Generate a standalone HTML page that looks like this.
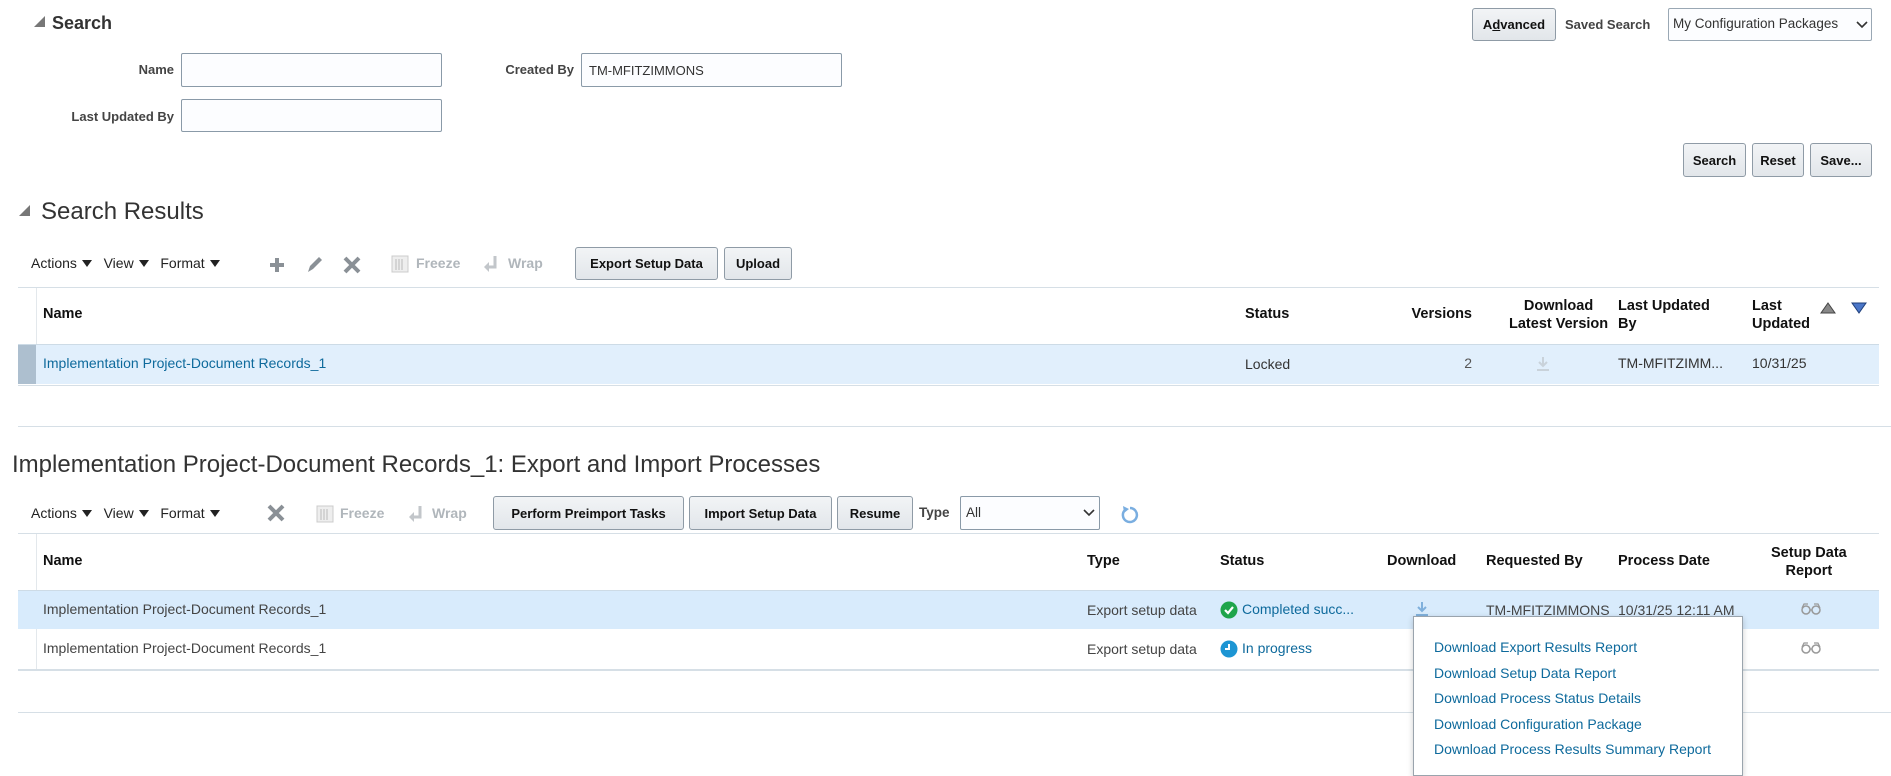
<!DOCTYPE html>
<html><head><style>
*{box-sizing:border-box;margin:0;padding:0}
body{width:1891px;height:769px;overflow:hidden;background:#fff;font-family:"Liberation Sans",Arial,sans-serif;font-size:13.5px;color:#333;position:relative}
.a{position:absolute;white-space:nowrap}
.lbl{font-weight:bold;color:#444;font-size:13px}
.inp{position:absolute;border:1px solid #8a9aa8;background:#fcfdff;border-radius:2px}
.btn{position:absolute;border:1px solid #8f9ba6;background:linear-gradient(#f2f4f6,#e2e6ea);border-radius:3px;font-weight:bold;font-size:13px;color:#111;text-align:center;display:flex;align-items:center;justify-content:center}
.hl{position:absolute;height:1px;background:#d6dfe6}
.th{font-weight:bold;color:#111;font-size:14.5px}
.link{color:#0e6a9c}
.dis{color:#b0b6bb;font-weight:bold}
.tri{display:inline-block;width:0;height:0;border-left:5px solid transparent;border-right:5px solid transparent;border-top:7px solid #222;margin-left:5px;vertical-align:1px}
</style></head><body>
<!-- Search -->
<div class="a" style="left:34px;top:16px;width:0;height:0;border-left:11px solid transparent;border-bottom:11px solid #777"></div>
<div class="a" style="left:52px;top:13px;font-size:18px;font-weight:bold;color:#333">Search</div>
<div class="a lbl" style="right:1717px;top:62px">Name</div>
<div class="inp" style="left:181px;top:53px;width:261px;height:34px"></div>
<div class="a lbl" style="right:1317px;top:62px">Created By</div>
<div class="inp" style="left:581px;top:53px;width:261px;height:34px"></div>
<div class="a" style="left:589px;top:63px;font-size:13px;color:#333">TM-MFITZIMMONS</div>
<div class="a lbl" style="right:1717px;top:109px">Last Updated By</div>
<div class="inp" style="left:181px;top:99px;width:261px;height:33px"></div>
<div class="btn" style="left:1472px;top:8px;width:84px;height:33px">A<u>d</u>vanced</div>
<div class="a lbl" style="left:1565px;top:17px">Saved Search</div>
<div class="inp" style="left:1668px;top:8px;width:204px;height:33px;border-color:#9aa8b4"></div>
<div class="a" style="left:1673px;top:16px;font-size:13.5px;color:#333">My Configuration Packages</div>
<svg class="a" style="left:1856px;top:20px" width="12" height="10"><path d="M1 2l5 5 5-5" stroke="#333" stroke-width="1.6" fill="none"/></svg>
<div class="btn" style="left:1683px;top:143px;width:63px;height:34px">Search</div>
<div class="btn" style="left:1752px;top:143px;width:52px;height:34px">Reset</div>
<div class="btn" style="left:1810px;top:143px;width:62px;height:34px">Save...</div>

<!-- Search results -->
<div class="a" style="left:19px;top:205px;width:0;height:0;border-left:11px solid transparent;border-bottom:11px solid #777"></div>
<div class="a" style="left:41px;top:198px;font-size:24px;color:#333">Search Results</div>
<div class="a" style="left:31px;top:255px;font-size:14px;color:#222">Actions<span class="tri"></span>&nbsp;&nbsp; View<span class="tri"></span>&nbsp;&nbsp; Format<span class="tri"></span></div>
<svg class="a" style="left:267px;top:255px" width="20" height="20"><path d="M10 3v14M3 10h14" stroke="#8a9096" stroke-width="4"/></svg>
<svg class="a" style="left:304px;top:253px" width="22" height="22"><path d="M4 19l2-6L15 4l3 3-9 9z" fill="#8a9096"/></svg>
<svg class="a" style="left:342px;top:255px" width="20" height="20"><path d="M3 3l14 14M17 3L3 17" stroke="#8a9096" stroke-width="4"/></svg>
<svg class="a" style="left:391px;top:255px" width="18" height="18"><rect x="1" y="1" width="16" height="16" fill="#eee" stroke="#ccc"/><path d="M5 4v11M8 4v11M11 4v11" stroke="#bbb"/></svg>
<div class="a dis" style="left:416px;top:255px;font-size:14px">Freeze</div>
<svg class="a" style="left:483px;top:255px" width="16" height="18"><path d="M12 1v11H4" stroke="#c2c6ca" stroke-width="3" fill="none"/><path d="M1 12l5-5v10z" fill="#c2c6ca"/></svg>
<div class="a dis" style="left:508px;top:255px;font-size:14px">Wrap</div>
<div class="btn" style="left:575px;top:247px;width:143px;height:33px">Export Setup Data</div>
<div class="btn" style="left:724px;top:247px;width:68px;height:33px">Upload</div>

<div class="hl" style="left:18px;top:287px;width:1861px"></div>
<div class="a" style="left:36px;top:288px;width:1px;height:57px;background:#e3e8ec"></div>
<div class="a th" style="left:43px;top:306px">Name</div>
<div class="a th" style="left:1245px;top:306px">Status</div>
<div class="a th" style="right:419px;top:306px">Versions</div>
<div class="a th" style="left:1509px;top:297px;text-align:center;line-height:18px">Download<br>Latest Version</div>
<div class="a th" style="left:1618px;top:297px;line-height:18px">Last Updated<br>By</div>
<div class="a th" style="left:1752px;top:297px;line-height:18px">Last<br>Updated</div>
<svg class="a" style="left:1819px;top:301px" width="18" height="14"><path d="M9 2L16 12H2z" fill="#888" stroke="#444"/></svg>
<svg class="a" style="left:1850px;top:301px" width="18" height="14"><path d="M2 2h14L9 12z" fill="#4a76c8" stroke="#1f3f7a"/></svg>
<div class="a" style="left:18px;top:344px;width:1861px;height:40px;background:#e1effc;border-top:1px solid #cddbe6"></div>
<div class="a" style="left:18px;top:345px;width:18px;height:39px;background:#adbfcf"></div>
<div class="a link" style="left:43px;top:355px;font-size:14px">Implementation Project-Document Records_1</div>
<div class="a" style="left:1245px;top:356px;font-size:14px">Locked</div>
<div class="a" style="right:419px;top:355px;font-size:14px;color:#555">2</div>
<svg class="a" style="left:1535px;top:355px" width="16" height="18"><path d="M8 2v9M4 7l4 4 4-4M2 15h12" stroke="#c9d2da" stroke-width="2" fill="none"/></svg>
<div class="a" style="left:1618px;top:355px;font-size:14px">TM-MFITZIMM...</div>
<div class="a" style="left:1752px;top:355px;font-size:14px">10/31/25</div>
<div class="hl" style="left:18px;top:385px;width:1861px"></div>

<div class="hl" style="left:18px;top:426px;width:1873px"></div>
<div class="a" style="left:12px;top:451px;font-size:24px;color:#333">Implementation Project-Document Records_1: Export and Import Processes</div>

<div class="a" style="left:31px;top:505px;font-size:14px;color:#222">Actions<span class="tri"></span>&nbsp;&nbsp; View<span class="tri"></span>&nbsp;&nbsp; Format<span class="tri"></span></div>
<svg class="a" style="left:266px;top:503px" width="20" height="20"><path d="M3 3l14 14M17 3L3 17" stroke="#8a9096" stroke-width="4"/></svg>
<svg class="a" style="left:316px;top:505px" width="18" height="18"><rect x="1" y="1" width="16" height="16" fill="#eee" stroke="#ccc"/><path d="M5 4v11M8 4v11M11 4v11" stroke="#bbb"/></svg>
<div class="a dis" style="left:340px;top:505px;font-size:14px">Freeze</div>
<svg class="a" style="left:408px;top:505px" width="16" height="18"><path d="M12 1v11H4" stroke="#c2c6ca" stroke-width="3" fill="none"/><path d="M1 12l5-5v10z" fill="#c2c6ca"/></svg>
<div class="a dis" style="left:432px;top:505px;font-size:14px">Wrap</div>
<div class="btn" style="left:493px;top:496px;width:191px;height:34px">Perform Preimport Tasks</div>
<div class="btn" style="left:689px;top:496px;width:143px;height:34px">Import Setup Data</div>
<div class="btn" style="left:837px;top:496px;width:76px;height:34px">Resume</div>
<div class="a lbl" style="left:919px;top:505px;font-size:13.5px">Type</div>
<div class="inp" style="left:960px;top:496px;width:140px;height:34px"></div>
<div class="a" style="left:966px;top:505px;font-size:13.5px">All</div>
<svg class="a" style="left:1083px;top:508px" width="12" height="10"><path d="M1 2l5 5 5-5" stroke="#333" stroke-width="1.6" fill="none"/></svg>
<svg class="a" style="left:1119px;top:503px" width="22" height="22"><path d="M6 7a7 7 0 1 0 5-2" stroke="#7aaee0" stroke-width="2.5" fill="none"/><path d="M4 3l6 3-5 4z" fill="#7aaee0"/></svg>

<div class="hl" style="left:18px;top:533px;width:1861px"></div>
<div class="a" style="left:36px;top:534px;width:1px;height:136px;background:#e3e8ec"></div>
<div class="a th" style="left:43px;top:553px">Name</div>
<div class="a th" style="left:1087px;top:553px">Type</div>
<div class="a th" style="left:1220px;top:553px">Status</div>
<div class="a th" style="left:1387px;top:553px">Download</div>
<div class="a th" style="left:1486px;top:553px">Requested By</div>
<div class="a th" style="left:1618px;top:553px">Process Date</div>
<div class="a th" style="left:1771px;top:544px;text-align:center;line-height:18px">Setup Data<br>Report</div>
<div class="a" style="left:18px;top:590px;width:1861px;height:39px;background:#d8ebfc;border-top:1px solid #cddbe6"></div>
<div class="a" style="left:43px;top:601px;font-size:14px;color:#444">Implementation Project-Document Records_1</div>
<div class="a" style="left:1087px;top:602px;font-size:14px;color:#444">Export setup data</div>
<svg class="a" style="left:1220px;top:601px" width="18" height="18"><circle cx="9" cy="9" r="8.5" fill="#1fa54b"/><path d="M5 9l3 3 5-6" stroke="#fff" stroke-width="2.2" fill="none"/></svg>
<div class="a link" style="left:1242px;top:601px;font-size:14px">Completed succ...</div>
<svg class="a" style="left:1414px;top:600px" width="16" height="18"><path d="M8 2v9M4 7l4 4 4-4M2 15h12" stroke="#7fb0dc" stroke-width="2" fill="none"/></svg>
<div class="a" style="left:1486px;top:602px;font-size:14px;color:#444">TM-MFITZIMMONS</div>
<div class="a" style="left:1618px;top:602px;font-size:14px;color:#444">10/31/25 12:11 AM</div>
<svg class="a" style="left:1800px;top:602px" width="22" height="14"><circle cx="6" cy="8" r="4" stroke="#999" fill="none" stroke-width="1.5"/><circle cx="16" cy="8" r="4" stroke="#999" fill="none" stroke-width="1.5"/><path d="M2 6l2-4h4M20 6l-2-4h-4M10 8h2" stroke="#999" fill="none" stroke-width="1.2"/></svg>
<div class="a" style="left:43px;top:640px;font-size:14px;color:#444">Implementation Project-Document Records_1</div>
<div class="a" style="left:1087px;top:641px;font-size:14px;color:#444">Export setup data</div>
<svg class="a" style="left:1220px;top:640px" width="18" height="18"><circle cx="9" cy="9" r="8.5" fill="#1d95d3"/><path d="M9 4v5h-4" stroke="#fff" stroke-width="2" fill="none"/></svg>
<div class="a link" style="left:1242px;top:640px;font-size:14px">In progress</div>
<svg class="a" style="left:1800px;top:641px" width="22" height="14"><circle cx="6" cy="8" r="4" stroke="#999" fill="none" stroke-width="1.5"/><circle cx="16" cy="8" r="4" stroke="#999" fill="none" stroke-width="1.5"/><path d="M2 6l2-4h4M20 6l-2-4h-4M10 8h2" stroke="#999" fill="none" stroke-width="1.2"/></svg>
<div class="hl" style="left:18px;top:669px;width:1861px;height:2px"></div>
<div class="hl" style="left:18px;top:712px;width:1873px"></div>

<!-- popup -->
<div class="a" style="left:1413px;top:616px;width:330px;height:160px;background:#fff;border:1px solid #9aa4ad;box-shadow:0 2px 6px rgba(0,0,0,.2)"></div>
<div class="a link" style="left:1434px;top:639px;font-size:14px">Download Export Results Report</div>
<div class="a link" style="left:1434px;top:665px;font-size:14px">Download Setup Data Report</div>
<div class="a link" style="left:1434px;top:690px;font-size:14px">Download Process Status Details</div>
<div class="a link" style="left:1434px;top:716px;font-size:14px">Download Configuration Package</div>
<div class="a link" style="left:1434px;top:741px;font-size:14px">Download Process Results Summary Report</div>
</body></html>
